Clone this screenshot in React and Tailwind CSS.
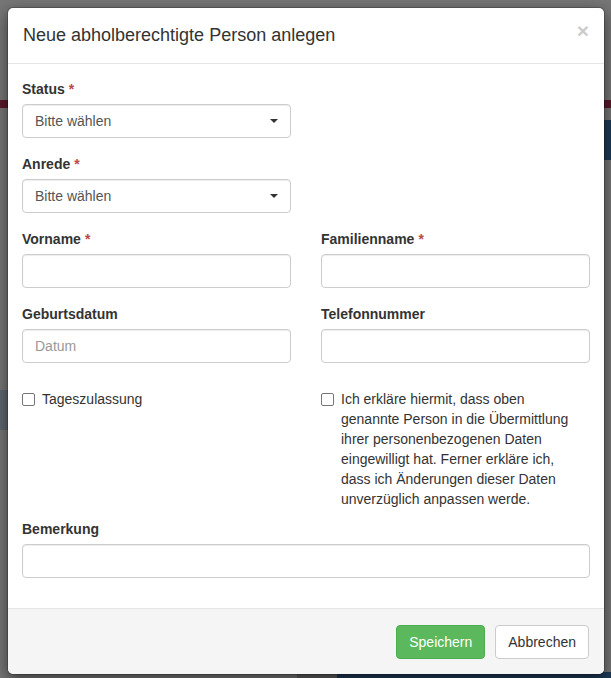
import React from "react";

const Req = () => <span className="ml-1 text-[#b94a48]">*</span>;

const Label = ({ children, required }) => (
  <label className="mb-[5px] block text-[14px] font-bold leading-[20px] text-[#333]">
    {children}
    {required && <Req />}
  </label>
);

const inputCls =
  "block h-[34px] w-full rounded-[4px] border border-[#ccc] bg-white px-3 text-[14px] text-[#555] shadow-[inset_0_1px_1px_rgba(0,0,0,0.075)] outline-none placeholder:text-[#999]";

const SelectBox = () => (
  <div className="flex h-[34px] w-full items-center justify-between rounded-[4px] border border-[#ccc] bg-white pl-3 pr-[12px] text-[14px] text-[#555] shadow-[inset_0_1px_1px_rgba(0,0,0,0.075)]">
    <span>Bitte wählen</span>
    <span className="h-0 w-0 border-x-[4px] border-t-[4px] border-x-transparent border-t-[#333]" />
  </div>
);

const Check = () => (
  <span className="mt-[4px] block h-[13px] w-[13px] shrink-0 rounded-[2px] border border-[#767676] bg-white" />
);

export default function App() {
  return (
    <div
      className="relative h-[678px] overflow-hidden bg-[#767676]"
      style={{ fontFamily: '"Liberation Sans", Arial, sans-serif' }}
    >
      {/* dimmed page behind the modal */}
      <div aria-hidden className="flex flex-col">
        <div className="h-[100px]" />
        <div className="h-[8px] bg-[#5a1b2c]" />
        <div className="flex h-[52px] justify-end pt-[12px]">
          <div className="w-[280px] bg-[#1e3a57]" />
        </div>
        <div className="h-[230px]" />
        <div className="h-[40px] w-[120px] bg-[#5e6872]" />
        <div className="h-[242px]" />
        <div className="flex h-[6px] justify-end">
          <div className="w-[40px] bg-[#5e5e5e]" />
          <div className="w-[274px] bg-[#1e3a57]" />
        </div>
      </div>

      <div className="absolute left-[7px] top-[7px] w-[598px] rounded-[6px] border border-black/20 bg-white bg-clip-padding shadow-[0_5px_15px_rgba(0,0,0,0.5)]">
        <div className="flex items-start justify-between border-b border-[#e5e5e5] p-[15px] pt-[14px]">
          <h4 className="text-[18px] leading-[26px] text-[#333]">
            Neue abholberechtigte Person anlegen
          </h4>
          <button className="-mt-[2px] text-[21px] font-bold leading-none text-black opacity-20">
            ×
          </button>
        </div>

        <div className="px-[14px] pt-[15px] pb-[15px]">
          <div className="grid grid-cols-2 gap-x-[30px]">
            <div className="mb-[16px]">
              <Label required>Status</Label>
              <SelectBox />
            </div>
            <div />
            <div className="mb-[16px]">
              <Label required>Anrede</Label>
              <SelectBox />
            </div>
            <div />
            <div className="mb-[16px]">
              <Label required>Vorname</Label>
              <input className={inputCls} />
            </div>
            <div className="mb-[16px]">
              <Label required>Familienname</Label>
              <input className={inputCls} />
            </div>
            <div className="mb-[16px]">
              <Label>Geburtsdatum</Label>
              <input className={inputCls} placeholder="Datum" />
            </div>
            <div className="mb-[16px]">
              <Label>Telefonnummer</Label>
              <input className={inputCls} />
            </div>
            <div className="mt-[10px] mb-[10px] flex gap-[7px] text-[14px] leading-[20px] text-[#333]">
              <Check />
              <span>Tageszulassung</span>
            </div>
            <div className="mt-[10px] mb-[10px] flex gap-[7px] text-[14px] leading-[20px] text-[#333]">
              <Check />
              <span className="max-w-[236px]">
                Ich erkläre hiermit, dass oben genannte Person in die Übermittlung ihrer
                personenbezogenen Daten eingewilligt hat. Ferner erkläre ich, dass ich
                Änderungen dieser Daten unverzüglich anpassen werde.
              </span>
            </div>
          </div>
          <div className="mb-[15px]">
            <Label>Bemerkung</Label>
            <input className={inputCls} />
          </div>
        </div>

        <div className="flex justify-end gap-[10px] rounded-b-[6px] border-t border-[#e5e5e5] bg-[#f5f5f5] p-[15px] pt-[16px]">
          <button className="h-[34px] rounded-[4px] border border-[#4cae4c] bg-[#5cb85c] px-3 text-[14px] text-white">
            Speichern
          </button>
          <button className="h-[34px] rounded-[4px] border border-[#ccc] bg-white px-3 text-[14px] text-[#333]">
            Abbrechen
          </button>
        </div>
      </div>
    </div>
  );
}
